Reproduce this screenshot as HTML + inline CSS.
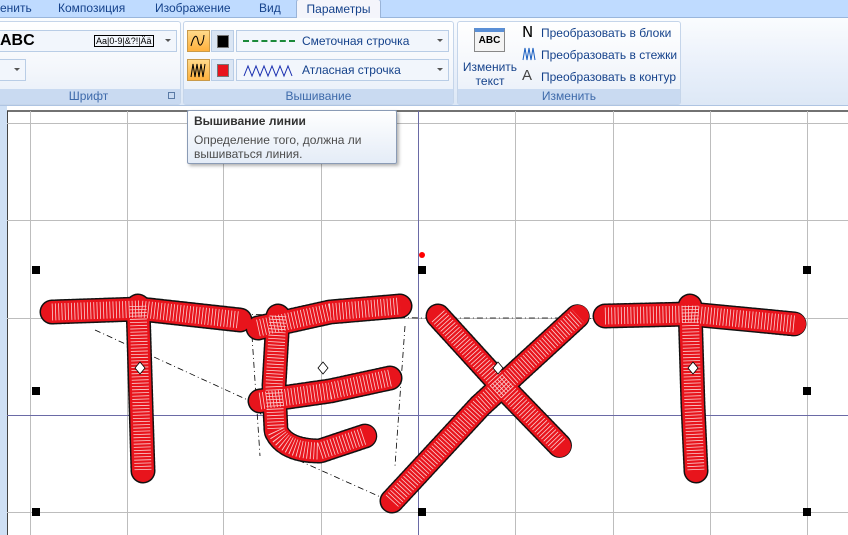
<!DOCTYPE html>
<html><head><meta charset="utf-8">
<style>
*{margin:0;padding:0;box-sizing:border-box}
body{width:848px;height:535px;overflow:hidden;background:#fff;font-family:"Liberation Sans",sans-serif;position:relative}
.tabs{position:absolute;left:0;top:0;width:848px;height:18px;background:#bfdbff;border-bottom:1px solid #99b6dc}
.tab{position:absolute;top:1px;font-size:12px;color:#15428b}
.tab.act{top:-1px;left:296px;width:85px;height:19px;background:#f4f5fb;border:1px solid #9ab4d8;border-bottom:none;border-radius:3px 3px 0 0;text-align:center;padding-top:2px}
.rib{position:absolute;left:0;top:18px;width:848px;height:88px;background:linear-gradient(#fafcfe,#e8effa 60%,#dde8f6);border-bottom:1px solid #aec4e2}
.grp{position:absolute;top:3px;height:84px;border:1px solid #c5d5ea;border-radius:3px;background:linear-gradient(#fff,#f3f6fb 60%,#e6eef8)}
.gl{position:absolute;left:0;right:0;bottom:0;height:15px;background:#c9daf1;color:#3e6aaa;font-size:12px;text-align:center;line-height:15px}
.dd{position:absolute;background:#f2f6fc;border:1px solid #b9cde6}
.arr{position:absolute;right:5px;top:8px;width:0;height:0;border:3px solid transparent;border-top:3px solid #555}
.lbl{font-size:12px;color:#15428b;position:absolute;white-space:nowrap}
.canvas{position:absolute;left:0;top:106px;width:848px;height:429px;background:#fff}
.tip{position:absolute;left:187px;top:110px;width:210px;height:54px;background:linear-gradient(#fff,#e4ecf7);border:1px solid #8a9bb5;border-radius:2px;box-shadow:2px 2px 3px rgba(0,0,0,.3);font-size:12px;color:#4c4c4c;padding:3px 6px;line-height:14px}
</style></head><body>
<div class="tabs">
<span class="tab" style="left:0">енить</span>
<span class="tab" style="left:58px">Композиция</span>
<span class="tab" style="left:155px">Изображение</span>
<span class="tab" style="left:259px">Вид</span>
<span class="tab act">Параметры</span>
</div>
<div class="rib">
<div class="grp" style="left:-4px;width:185px">
 <div class="dd" style="left:0;top:8px;width:180px;height:22px"><span style="position:absolute;left:2px;top:1px;font-weight:bold;font-size:16px">ABC</span><span style="position:absolute;left:96px;top:4px;font-size:9px;border:1px solid #000;padding:0 1px;line-height:10px">Aa|0-9|&amp;?!|Ää</span><div class="arr"></div></div>
 <div class="dd" style="left:0;top:37px;width:29px;height:22px"><div class="arr"></div></div>
 <div class="gl">Шрифт<span style="position:absolute;right:5px;top:3px;width:7px;height:7px;border:1px solid #5a7aa5"></span></div>
</div>
<div class="grp" style="left:183px;width:271px">
 <div style="position:absolute;left:3px;top:8px;width:23px;height:22px;background:linear-gradient(#ffd98a,#ffb13d);border:1px solid #c99a4a"><svg width="21" height="20"><path d="M3 15 C6 3 9 3 10 10 C11 17 15 15 16 4" stroke="#000" fill="none"/></svg></div>
 <div style="position:absolute;left:27px;top:8px;width:23px;height:22px;background:#dbe6f4;border:1px solid #b9cde6"><div style="position:absolute;left:5px;top:4px;width:12px;height:13px;background:#000;border:1px solid #777"></div></div>
 <div class="dd" style="left:52px;top:8px;width:213px;height:22px"><div style="position:absolute;left:6px;top:9px;width:52px;border-top:2px dashed #1c8a3a"></div><span class="lbl" style="left:65px;top:3px">Сметочная строчка</span><div class="arr"></div></div>
 <div style="position:absolute;left:3px;top:37px;width:23px;height:22px;background:linear-gradient(#ffd98a,#ffb13d);border:1px solid #c99a4a"><svg width="21" height="20"><path d="M3 17 L5 4 L7 17 L9 4 L11 17 L13 4 L15 17 L17 4" stroke="#000" fill="none"/></svg></div>
 <div style="position:absolute;left:27px;top:37px;width:23px;height:22px;background:#dbe6f4;border:1px solid #b9cde6"><div style="position:absolute;left:5px;top:4px;width:12px;height:13px;background:#e8141c;border:1px solid #777"></div></div>
 <div class="dd" style="left:52px;top:37px;width:213px;height:22px"><svg style="position:absolute;left:6px;top:4px" width="52" height="14"><path d="M1 12 L5 2 L9 12 L13 2 L17 12 L21 2 L25 12 L29 2 L33 12 L37 2 L41 12 L45 2 L49 12" stroke="#1a2fb0" fill="none"/></svg><span class="lbl" style="left:65px;top:3px">Атласная строчка</span><div class="arr"></div></div>
 <div class="gl">Вышивание</div>
</div>
<div class="grp" style="left:457px;width:224px">
 <div style="position:absolute;left:16px;top:6px;width:31px;height:24px;background:#f4f4f4;border:1px solid #888;border-top:4px solid #5a8fd6;font-weight:bold;font-size:10px;text-align:center;line-height:18px">ABC</div>
 <div class="lbl" style="left:2px;top:38px;width:60px;text-align:center;line-height:14px;white-space:normal">Изменить текст</div>
 <span style="position:absolute;left:64px;top:1px;font-size:15px;font-family:'DejaVu Sans'">N</span><span class="lbl" style="left:83px;top:4px">Преобразовать в блоки</span>
 <svg style="position:absolute;left:63px;top:24px" width="16" height="16"><path d="M2 14 L4 2 L6 14 L8 2 L10 14 L12 2 L14 14" stroke="#1a5fc0" fill="none"/></svg><span class="lbl" style="left:83px;top:26px">Преобразовать в стежки</span>
 <span style="position:absolute;left:64px;top:45px;font-size:15px;color:#444">A</span><span class="lbl" style="left:83px;top:48px">Преобразовать в контур</span>
 <div class="gl">Изменить</div>
</div>
</div>
<div class="canvas">
<svg width="848" height="429" style="position:absolute;left:0;top:0">
 <rect x="0" y="0" width="7" height="429" fill="#cfe0f5"/>
 <line x1="7" y1="5" x2="848" y2="5" stroke="#444" stroke-width="1.5"/>
 <line x1="7.5" y1="5" x2="7.5" y2="429" stroke="#444"/>
 <g stroke="#bdbdbd" stroke-width="1">
  <line x1="30.5" y1="5" x2="30.5" y2="429"/><line x1="127.5" y1="5" x2="127.5" y2="429"/><line x1="223.5" y1="5" x2="223.5" y2="429"/><line x1="321.5" y1="5" x2="321.5" y2="429"/><line x1="515.5" y1="5" x2="515.5" y2="429"/><line x1="613.5" y1="5" x2="613.5" y2="429"/><line x1="710.5" y1="5" x2="710.5" y2="429"/><line x1="807.5" y1="5" x2="807.5" y2="429"/>
  <line x1="7" y1="17.5" x2="848" y2="17.5"/><line x1="7" y1="114.5" x2="848" y2="114.5"/><line x1="7" y1="212.5" x2="848" y2="212.5"/><line x1="7" y1="406.5" x2="848" y2="406.5"/>
 </g>
 <line x1="418.5" y1="5" x2="418.5" y2="429" stroke="#6a6aa6"/>
 <line x1="7" y1="309.5" x2="848" y2="309.5" stroke="#6a6aa6"/>
 <g fill="none" stroke="#000" stroke-width="0.8" stroke-dasharray="6 3 1 3">
  <path d="M95 224 L250 295 L300 355 L385 393"/>
  <path d="M48 204 L420 212 L560 212 L800 215"/>
  <path d="M252 230 L260 350 M405 220 L395 360"/>
 </g>
 <g fill="none" stroke-linecap="round" stroke-linejoin="round">
  <g stroke="#111" stroke-width="25" stroke-dasharray="1.5 2.5">
   <path id="a" d="M52 206 L140 203 L240 214"/>
   <path id="b" d="M138 200 L141 300 L143 365"/>
   <path id="c" d="M258 222 L330 206 L400 200"/>
   <path id="d" d="M278 210 L274 280 L276 325 Q285 345 320 345 L365 330"/>
   <path id="e" d="M260 295 L330 285 L390 272"/>
   <path id="f" d="M438 210 L500 278 L560 340"/>
   <path id="g" d="M392 395 L480 300 L578 210"/>
   <path id="h" d="M605 210 L690 208 L795 218"/>
   <path id="i" d="M690 200 L693 300 L696 365"/>
  </g>
  <g stroke="#e8141c" stroke-width="22">
   <use href="#a"/><use href="#b"/><use href="#c"/><use href="#d"/><use href="#e"/><use href="#f"/><use href="#g"/><use href="#h"/><use href="#i"/>
  </g>
  <g stroke="#fff" stroke-width="17" stroke-dasharray="0.8 2.4" stroke-linecap="butt" opacity="0.8">
   <use href="#a"/><use href="#b"/><use href="#c"/><use href="#d"/><use href="#e"/><use href="#f"/><use href="#g"/><use href="#h"/><use href="#i"/>
  </g>
 </g>
 <g fill="#000">
  <rect x="32" y="160" width="8" height="8"/><rect x="418" y="160" width="8" height="8"/><rect x="803" y="160" width="8" height="8"/>
  <rect x="32" y="281" width="8" height="8"/><rect x="803" y="281" width="8" height="8"/>
  <rect x="32" y="402" width="8" height="8"/><rect x="418" y="402" width="8" height="8"/><rect x="803" y="402" width="8" height="8"/>
 </g>
 <circle cx="422" cy="149" r="3" fill="#f00"/>
 <g fill="#fff" stroke="#000" stroke-width="0.8">
  <path d="M140 256 L145 262 L140 268 L135 262Z"/><path d="M323 256 L328 262 L323 268 L318 262Z"/><path d="M498 256 L503 262 L498 268 L493 262Z"/><path d="M693 256 L698 262 L693 268 L688 262Z"/>
 </g>
</svg>
</div>
<div class="tip"><div style="font-weight:bold;color:#333;margin-bottom:5px">Вышивание линии</div>Определение того, должна ли<br>вышиваться линия.</div>
</body></html>
